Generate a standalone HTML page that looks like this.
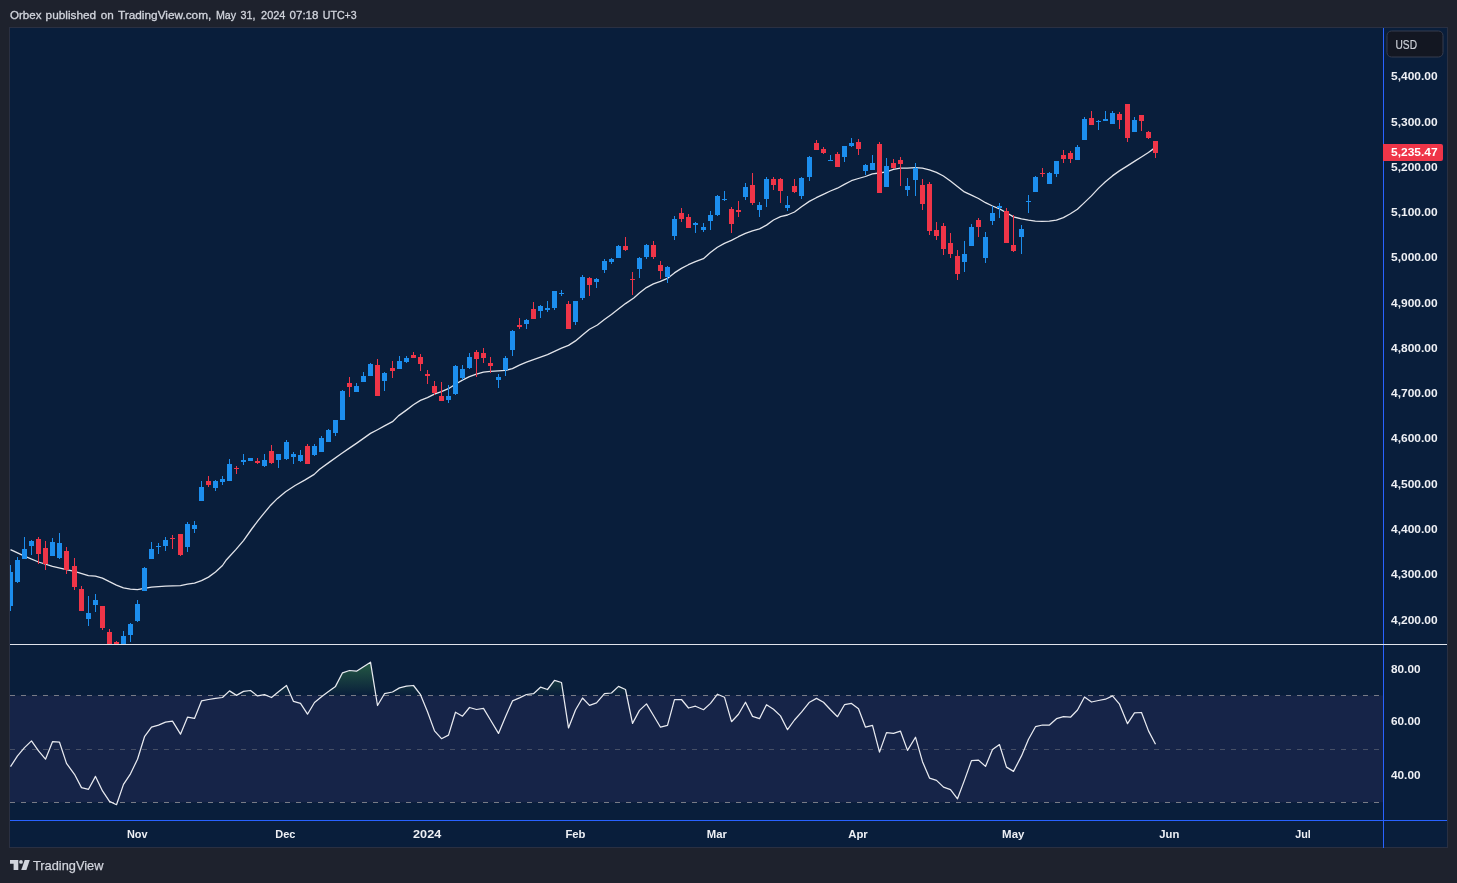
<!DOCTYPE html>
<html><head><meta charset="utf-8"><title>Orbex on TradingView</title>
<style>
html,body{margin:0;padding:0;background:#1e222d;}
body{width:1457px;height:883px;overflow:hidden;position:relative;font-family:'Liberation Sans', Arial, sans-serif;}
svg{position:absolute;left:0;top:0;display:block;will-change:transform}
.ax{font:bold 11.5px 'Liberation Sans', Arial, sans-serif;fill:#eef0f5}
.hd{font:11px 'Liberation Sans', Arial, sans-serif;fill:#d1d4dc;stroke:#d1d4dc;stroke-width:0.3px}
</style></head><body>
<svg width="1457" height="883" viewBox="0 0 1457 883">
<defs>
<clipPath id="main"><rect x="10" y="28" width="1373" height="616"/></clipPath>
<clipPath id="ob"><rect x="10" y="646" width="1373" height="49.5"/></clipPath>
<linearGradient id="g" x1="0" y1="615.2" x2="0" y2="695.5" gradientUnits="userSpaceOnUse">
<stop offset="0" stop-color="#4caf50" stop-opacity="1"/><stop offset="1" stop-color="#4caf50" stop-opacity="0"/></linearGradient>
</defs>
<rect width="1457" height="883" fill="#1e222d"/>
<rect x="9.5" y="27.5" width="1438" height="820" fill="#091e3b" stroke="#2a3042"/>
<text y="18.9" class="hd"><tspan x="10.0" textLength="31.5" lengthAdjust="spacingAndGlyphs">Orbex</tspan> <tspan x="45.6" textLength="50.6" lengthAdjust="spacingAndGlyphs">published</tspan> <tspan x="100.7" textLength="13.0" lengthAdjust="spacingAndGlyphs">on</tspan> <tspan x="118.0" textLength="93.3" lengthAdjust="spacingAndGlyphs">TradingView.com,</tspan> <tspan x="215.9" textLength="20.2" lengthAdjust="spacingAndGlyphs">May</tspan> <tspan x="240.6" textLength="15.0" lengthAdjust="spacingAndGlyphs">31,</tspan> <tspan x="261.1" textLength="24.3" lengthAdjust="spacingAndGlyphs">2024</tspan> <tspan x="289.5" textLength="29.0" lengthAdjust="spacingAndGlyphs">07:18</tspan> <tspan x="322.8" textLength="33.9" lengthAdjust="spacingAndGlyphs">UTC+3</tspan></text>
<!-- RSI band -->
<rect x="10" y="695.5" width="1373" height="106.8" fill="#162448"/>
<path d="M10 695.5H1383" stroke="#787b86" stroke-dasharray="5 6"/>
<path d="M10 749.5H1383" stroke="#787b86" stroke-opacity="0.5" stroke-dasharray="5 6"/>
<path d="M10 802.5H1383" stroke="#787b86" stroke-dasharray="5 6"/>
<path d="M10.5 695.5 L10.5 766.7 L17.5 755.9 L24.5 747.6 L31.5 740.9 L38.5 750.9 L45.5 759.2 L52.5 741.7 L59.5 742.2 L66.5 763.4 L74.5 774.3 L81.5 787.6 L88.5 789.3 L95.5 776.4 L102.5 790.9 L109.5 801.4 L116.5 804.7 L123.5 784.4 L130.5 773.8 L137.5 759.2 L144.5 736.7 L151.5 727.1 L158.5 725.1 L165.5 722.2 L172.5 721.2 L180.5 734.2 L187.5 717.2 L194.5 718.4 L201.5 700.9 L208.5 699.5 L215.5 698.4 L222.5 697.5 L229.5 690.9 L236.5 695.4 L243.5 691.4 L250.5 690.5 L257.5 695.9 L264.5 694.7 L271.5 697.5 L278.5 691.7 L286.5 685.5 L293.5 701.4 L300.5 703.4 L307.5 714.2 L314.5 702.5 L321.5 696.7 L328.5 691.4 L335.5 686.4 L342.5 672.8 L349.5 670.5 L356.5 671.2 L363.5 666.7 L370.5 662.2 L377.5 705.5 L384.5 693.7 L392.5 692.0 L399.5 687.9 L406.5 686.2 L413.5 685.5 L420.5 694.7 L427.5 711.7 L434.5 730.9 L441.5 738.7 L448.5 735.1 L455.5 712.2 L462.5 716.2 L469.5 707.5 L476.5 709.5 L483.5 708.4 L490.5 720.0 L498.5 733.4 L505.5 716.7 L512.5 700.9 L519.5 697.9 L526.5 694.5 L533.5 693.7 L540.5 687.2 L547.5 689.5 L554.5 680.4 L561.5 682.5 L568.5 727.9 L575.5 710.0 L582.5 698.0 L589.5 705.4 L596.5 702.9 L604.5 693.7 L611.5 693.0 L618.5 686.4 L625.5 689.5 L632.5 723.4 L639.5 710.4 L646.5 703.9 L653.5 715.5 L660.5 727.2 L667.5 725.4 L674.5 699.7 L681.5 699.5 L688.5 708.0 L695.5 706.2 L703.5 709.7 L710.5 703.4 L717.5 694.2 L724.5 697.2 L731.5 721.7 L738.5 714.2 L745.5 702.2 L752.5 716.4 L759.5 718.7 L766.5 704.7 L773.5 709.2 L780.5 715.9 L787.5 729.7 L794.5 720.0 L801.5 712.2 L809.5 702.2 L816.5 698.4 L823.5 702.2 L830.5 709.7 L837.5 716.7 L844.5 704.7 L851.5 703.4 L858.5 708.7 L865.5 727.2 L872.5 725.4 L879.5 752.1 L886.5 732.6 L893.5 733.4 L900.5 731.2 L907.5 750.4 L915.5 737.2 L922.5 761.7 L929.5 778.1 L936.5 780.4 L943.5 787.1 L950.5 789.6 L957.5 798.8 L964.5 780.1 L971.5 760.6 L978.5 760.1 L985.5 766.4 L992.5 749.6 L999.5 744.6 L1006.5 767.1 L1013.5 771.4 L1021.5 755.9 L1028.5 739.2 L1035.5 726.7 L1042.5 725.0 L1049.5 725.0 L1056.5 718.7 L1063.5 716.7 L1070.5 717.2 L1077.5 710.0 L1084.5 697.0 L1091.5 702.0 L1098.5 700.5 L1105.5 699.2 L1112.5 695.9 L1119.5 704.2 L1127.5 723.7 L1134.5 712.9 L1141.5 712.5 L1148.5 730.9 L1155.5 744.2 L1155.5 695.5Z" fill="url(#g)" clip-path="url(#ob)"/>
<path d="M10.5 766.7 L17.5 755.9 L24.5 747.6 L31.5 740.9 L38.5 750.9 L45.5 759.2 L52.5 741.7 L59.5 742.2 L66.5 763.4 L74.5 774.3 L81.5 787.6 L88.5 789.3 L95.5 776.4 L102.5 790.9 L109.5 801.4 L116.5 804.7 L123.5 784.4 L130.5 773.8 L137.5 759.2 L144.5 736.7 L151.5 727.1 L158.5 725.1 L165.5 722.2 L172.5 721.2 L180.5 734.2 L187.5 717.2 L194.5 718.4 L201.5 700.9 L208.5 699.5 L215.5 698.4 L222.5 697.5 L229.5 690.9 L236.5 695.4 L243.5 691.4 L250.5 690.5 L257.5 695.9 L264.5 694.7 L271.5 697.5 L278.5 691.7 L286.5 685.5 L293.5 701.4 L300.5 703.4 L307.5 714.2 L314.5 702.5 L321.5 696.7 L328.5 691.4 L335.5 686.4 L342.5 672.8 L349.5 670.5 L356.5 671.2 L363.5 666.7 L370.5 662.2 L377.5 705.5 L384.5 693.7 L392.5 692.0 L399.5 687.9 L406.5 686.2 L413.5 685.5 L420.5 694.7 L427.5 711.7 L434.5 730.9 L441.5 738.7 L448.5 735.1 L455.5 712.2 L462.5 716.2 L469.5 707.5 L476.5 709.5 L483.5 708.4 L490.5 720.0 L498.5 733.4 L505.5 716.7 L512.5 700.9 L519.5 697.9 L526.5 694.5 L533.5 693.7 L540.5 687.2 L547.5 689.5 L554.5 680.4 L561.5 682.5 L568.5 727.9 L575.5 710.0 L582.5 698.0 L589.5 705.4 L596.5 702.9 L604.5 693.7 L611.5 693.0 L618.5 686.4 L625.5 689.5 L632.5 723.4 L639.5 710.4 L646.5 703.9 L653.5 715.5 L660.5 727.2 L667.5 725.4 L674.5 699.7 L681.5 699.5 L688.5 708.0 L695.5 706.2 L703.5 709.7 L710.5 703.4 L717.5 694.2 L724.5 697.2 L731.5 721.7 L738.5 714.2 L745.5 702.2 L752.5 716.4 L759.5 718.7 L766.5 704.7 L773.5 709.2 L780.5 715.9 L787.5 729.7 L794.5 720.0 L801.5 712.2 L809.5 702.2 L816.5 698.4 L823.5 702.2 L830.5 709.7 L837.5 716.7 L844.5 704.7 L851.5 703.4 L858.5 708.7 L865.5 727.2 L872.5 725.4 L879.5 752.1 L886.5 732.6 L893.5 733.4 L900.5 731.2 L907.5 750.4 L915.5 737.2 L922.5 761.7 L929.5 778.1 L936.5 780.4 L943.5 787.1 L950.5 789.6 L957.5 798.8 L964.5 780.1 L971.5 760.6 L978.5 760.1 L985.5 766.4 L992.5 749.6 L999.5 744.6 L1006.5 767.1 L1013.5 771.4 L1021.5 755.9 L1028.5 739.2 L1035.5 726.7 L1042.5 725.0 L1049.5 725.0 L1056.5 718.7 L1063.5 716.7 L1070.5 717.2 L1077.5 710.0 L1084.5 697.0 L1091.5 702.0 L1098.5 700.5 L1105.5 699.2 L1112.5 695.9 L1119.5 704.2 L1127.5 723.7 L1134.5 712.9 L1141.5 712.5 L1148.5 730.9 L1155.5 744.2" fill="none" stroke="#e8eaf0" stroke-width="1.25" stroke-linejoin="round"/>
<g clip-path="url(#main)">
<path d="M10.5 549.7 L24.5 556.2 L38.5 562.0 L52.5 566.4 L66.5 569.7 L74.4 571.4 L88.4 575.6 L95.4 576.1 L102.4 578.1 L109.4 581.7 L116.4 585.1 L123.4 587.9 L130.4 589.2 L137.4 589.6 L144.4 588.4 L151.4 587.2 L158.4 586.6 L165.4 586.1 L172.5 585.9 L180.5 585.7 L187.5 584.2 L194.5 583.1 L201.5 580.6 L208.5 577.1 L215.5 572.0 L222.5 565.5 L226.5 559.7 L236.0 549.4 L243.5 540.6 L251.7 529.0 L258.4 520.2 L263.9 513.4 L270.7 505.2 L277.5 498.4 L285.6 491.7 L295.1 485.5 L304.7 480.1 L314.2 474.4 L319.6 469.2 L329.1 462.4 L341.2 453.8 L349.4 448.1 L356.4 443.4 L363.5 438.4 L370.5 433.4 L377.5 429.7 L384.5 425.9 L392.5 421.7 L398.4 415.9 L406.4 410.1 L413.4 404.8 L420.4 400.4 L427.4 397.6 L434.4 394.2 L441.4 391.7 L448.4 388.7 L455.4 384.2 L462.4 380.1 L469.4 376.7 L476.4 374.2 L483.4 372.2 L490.4 371.4 L498.4 370.9 L505.4 370.4 L512.4 368.7 L519.4 365.1 L526.5 362.2 L533.5 359.7 L540.5 357.1 L547.5 354.7 L554.5 351.4 L561.5 348.1 L568.5 345.4 L575.5 340.9 L582.5 335.0 L589.5 329.2 L597.4 325.0 L604.4 319.5 L611.4 314.5 L618.4 309.1 L625.5 303.6 L633.8 298.0 L639.4 293.1 L646.4 287.6 L653.4 283.9 L660.4 281.4 L667.4 278.4 L674.4 272.9 L681.4 268.4 L688.4 264.7 L695.4 261.7 L703.4 258.7 L710.4 252.6 L717.4 247.2 L724.4 243.4 L731.4 240.4 L738.4 236.7 L745.4 233.4 L752.4 230.9 L759.5 228.9 L766.5 225.1 L773.5 220.0 L780.5 216.7 L787.5 215.0 L794.5 212.0 L801.5 206.7 L809.3 201.4 L816.3 197.7 L823.3 194.4 L830.4 191.0 L837.4 188.2 L844.4 184.4 L851.4 180.7 L858.4 178.5 L865.4 176.5 L872.4 173.9 L879.4 173.0 L886.4 171.9 L893.4 169.4 L900.4 168.2 L907.4 168.2 L915.4 167.7 L922.4 168.2 L929.4 169.9 L936.4 172.4 L943.4 176.0 L950.4 181.0 L957.4 186.4 L964.4 191.9 L971.4 195.2 L978.5 198.5 L985.5 202.7 L992.5 206.0 L999.5 208.9 L1006.5 212.7 L1013.5 216.9 L1021.5 218.9 L1028.5 220.2 L1035.3 221.1 L1042.3 221.4 L1049.3 221.1 L1056.4 220.1 L1063.4 217.6 L1070.4 213.8 L1077.4 209.2 L1084.4 202.6 L1091.4 195.9 L1098.4 188.4 L1105.4 181.7 L1112.4 175.9 L1119.4 170.9 L1127.4 165.9 L1134.4 161.4 L1141.4 157.0 L1148.4 152.5 L1153.4 148.9" fill="none" stroke="#e2e4ea" stroke-width="1.3" stroke-linejoin="round"/>
<path fill="#1c8eee" d="M10 565h1v46h-1zM8 572h5v34h-5zM17 557h1v26h-1zM15 560h5v22h-5zM24 537h1v22h-1zM22 549h5v10h-5zM31 540h1v15h-1zM29 541h5v5h-5zM52 538h1v18h-1zM50 542h5v14h-5zM59 533h1v26h-1zM57 543h5v15h-5zM88 596h1v30h-1zM86 613h5v6h-5zM95 594h1v18h-1zM93 600h5v5h-5zM123 631h1v19h-1zM121 636h5v14h-5zM130 623h1v19h-1zM128 624h5v11h-5zM137 600h1v22h-1zM135 604h5v17h-5zM144 567h1v24h-1zM142 568h5v23h-5zM151 542h1v17h-1zM149 549h5v10h-5zM158 543h1v11h-1zM156 546h5v1h-5zM165 537h1v14h-1zM163 540h5v6h-5zM187 522h1v30h-1zM185 524h5v23h-5zM194 521h1v12h-1zM192 525h5v4h-5zM201 481h1v20h-1zM199 487h5v14h-5zM215 480h1v11h-1zM213 481h5v7h-5zM222 476h1v9h-1zM220 479h5v3h-5zM229 459h1v22h-1zM227 464h5v17h-5zM243 454h1v11h-1zM241 460h5v2h-5zM250 458h1v3h-1zM248 458h5v3h-5zM264 454h1v13h-1zM262 460h5v6h-5zM278 454h1v14h-1zM276 454h5v6h-5zM286 440h1v20h-1zM284 442h5v17h-5zM293 452h1v12h-1zM291 454h5v3h-5zM300 450h1v12h-1zM298 455h5v6h-5zM314 444h1v12h-1zM312 446h5v9h-5zM321 436h1v16h-1zM319 438h5v14h-5zM328 429h1v13h-1zM326 430h5v12h-5zM335 420h1v16h-1zM333 420h5v13h-5zM342 390h1v30h-1zM340 391h5v29h-5zM356 383h1v9h-1zM354 386h5v6h-5zM363 372h1v10h-1zM361 376h5v6h-5zM370 363h1v13h-1zM368 364h5v12h-5zM384 372h1v19h-1zM382 373h5v8h-5zM399 356h1v13h-1zM397 361h5v8h-5zM406 356h1v7h-1zM404 358h5v4h-5zM448 385h1v18h-1zM446 396h5v4h-5zM455 365h1v30h-1zM453 366h5v28h-5zM462 365h1v15h-1zM460 369h5v9h-5zM469 353h1v16h-1zM467 357h5v11h-5zM498 374h1v14h-1zM496 377h5v3h-5zM505 356h1v20h-1zM503 358h5v12h-5zM512 330h1v26h-1zM510 331h5v19h-5zM526 319h1v10h-1zM524 320h5v4h-5zM540 305h1v13h-1zM538 306h5v5h-5zM547 301h1v11h-1zM545 308h5v2h-5zM554 291h1v19h-1zM552 291h5v17h-5zM561 290h1v6h-1zM559 293h5v1h-5zM575 301h1v24h-1zM573 301h5v21h-5zM582 275h1v25h-1zM580 277h5v21h-5zM596 278h1v10h-1zM594 279h5v3h-5zM604 259h1v14h-1zM602 261h5v9h-5zM611 258h1v6h-1zM609 259h5v3h-5zM618 245h1v13h-1zM616 246h5v12h-5zM639 257h1v21h-1zM637 258h5v11h-5zM646 244h1v15h-1zM644 245h5v12h-5zM667 266h1v17h-1zM665 267h5v10h-5zM674 216h1v24h-1zM672 219h5v17h-5zM695 222h1v11h-1zM693 223h5v2h-5zM703 223h1v9h-1zM701 227h5v3h-5zM710 211h1v19h-1zM708 215h5v6h-5zM717 195h1v21h-1zM715 196h5v19h-5zM724 191h1v10h-1zM722 199h5v1h-5zM745 183h1v17h-1zM743 187h5v10h-5zM759 202h1v15h-1zM757 205h5v5h-5zM766 177h1v30h-1zM764 179h5v20h-5zM787 196h1v15h-1zM785 205h5v3h-5zM801 177h1v22h-1zM799 178h5v18h-5zM809 156h1v25h-1zM807 157h5v20h-5zM830 155h1v6h-1zM828 160h5v1h-5zM844 146h1v16h-1zM842 146h5v11h-5zM851 138h1v9h-1zM849 143h5v3h-5zM865 164h1v11h-1zM863 165h5v6h-5zM872 155h1v15h-1zM870 163h5v7h-5zM886 158h1v29h-1zM884 166h5v21h-5zM907 178h1v18h-1zM905 186h5v4h-5zM915 163h1v33h-1zM913 168h5v12h-5zM964 241h1v31h-1zM962 254h5v8h-5zM971 224h1v22h-1zM969 227h5v19h-5zM985 232h1v31h-1zM983 237h5v21h-5zM992 206h1v19h-1zM990 213h5v8h-5zM999 203h1v15h-1zM997 206h5v2h-5zM1021 225h1v29h-1zM1019 229h5v8h-5zM1028 195h1v18h-1zM1026 201h5v1h-5zM1035 176h1v16h-1zM1033 177h5v15h-5zM1049 172h1v12h-1zM1047 173h5v11h-5zM1056 161h1v16h-1zM1054 161h5v13h-5zM1077 145h1v15h-1zM1075 147h5v13h-5zM1084 117h1v23h-1zM1082 119h5v21h-5zM1098 120h1v10h-1zM1096 121h5v1h-5zM1105 111h1v10h-1zM1103 119h5v2h-5zM1112 111h1v13h-1zM1110 113h5v11h-5zM1134 117h1v15h-1zM1132 120h5v12h-5z"/>
<path fill="#ef3548" d="M38 537h1v27h-1zM36 539h5v15h-5zM45 541h1v29h-1zM43 548h5v16h-5zM66 547h1v27h-1zM64 551h5v19h-5zM74 558h1v32h-1zM72 566h5v21h-5zM81 586h1v25h-1zM79 589h5v22h-5zM102 606h1v24h-1zM100 606h5v22h-5zM109 629h1v21h-1zM107 632h5v18h-5zM116 641h1v9h-1zM114 642h5v8h-5zM172 535h1v14h-1zM170 538h5v1h-5zM180 534h1v22h-1zM178 534h5v21h-5zM208 476h1v11h-1zM206 481h5v4h-5zM236 466h1v8h-1zM234 468h5v1h-5zM257 458h1v6h-1zM255 461h5v2h-5zM271 445h1v19h-1zM269 451h5v12h-5zM307 444h1v20h-1zM305 446h5v18h-5zM349 377h1v20h-1zM347 383h5v4h-5zM377 359h1v37h-1zM375 365h5v31h-5zM392 361h1v17h-1zM390 368h5v3h-5zM413 352h1v6h-1zM411 355h5v3h-5zM420 354h1v17h-1zM418 357h5v7h-5zM427 370h1v14h-1zM425 374h5v2h-5zM434 381h1v14h-1zM432 386h5v7h-5zM441 382h1v19h-1zM439 396h5v5h-5zM476 350h1v27h-1zM474 352h5v7h-5zM483 348h1v15h-1zM481 353h5v5h-5zM490 357h1v16h-1zM488 363h5v3h-5zM519 318h1v11h-1zM517 325h5v2h-5zM533 302h1v17h-1zM531 309h5v10h-5zM568 301h1v28h-1zM566 304h5v25h-5zM589 277h1v19h-1zM587 278h5v7h-5zM625 237h1v14h-1zM623 246h5v4h-5zM632 272h1v23h-1zM630 279h5v1h-5zM653 241h1v18h-1zM651 245h5v12h-5zM660 261h1v18h-1zM658 265h5v6h-5zM681 208h1v14h-1zM679 213h5v6h-5zM688 214h1v14h-1zM686 217h5v11h-5zM731 207h1v26h-1zM729 209h5v15h-5zM738 201h1v16h-1zM736 210h5v2h-5zM752 173h1v32h-1zM750 185h5v18h-5zM773 177h1v13h-1zM771 179h5v6h-5zM780 178h1v25h-1zM778 179h5v12h-5zM794 179h1v14h-1zM792 186h5v6h-5zM816 140h1v10h-1zM814 143h5v7h-5zM823 147h1v7h-1zM821 149h5v4h-5zM837 152h1v15h-1zM835 154h5v13h-5zM858 139h1v16h-1zM856 142h5v7h-5zM879 142h1v51h-1zM877 144h5v49h-5zM893 159h1v10h-1zM891 163h5v5h-5zM900 157h1v29h-1zM898 160h5v4h-5zM922 179h1v31h-1zM920 185h5v19h-5zM929 182h1v53h-1zM927 184h5v47h-5zM936 222h1v18h-1zM934 230h5v6h-5zM943 223h1v32h-1zM941 226h5v23h-5zM950 233h1v25h-1zM948 243h5v11h-5zM957 250h1v30h-1zM955 256h5v18h-5zM978 218h1v19h-1zM976 220h5v7h-5zM1006 208h1v35h-1zM1004 211h5v32h-5zM1013 215h1v37h-1zM1011 245h5v6h-5zM1042 168h1v9h-1zM1040 173h5v1h-5zM1063 150h1v13h-1zM1061 155h5v4h-5zM1070 151h1v12h-1zM1068 153h5v6h-5zM1091 111h1v14h-1zM1089 118h5v7h-5zM1119 112h1v17h-1zM1117 114h5v6h-5zM1127 104h1v38h-1zM1125 104h5v34h-5zM1141 115h1v16h-1zM1139 115h5v6h-5zM1148 131h1v8h-1zM1146 132h5v6h-5zM1155 141h1v17h-1zM1153 141h5v12h-5z"/>
</g>
<!-- separators / axes -->
<rect x="1383" y="28" width="1" height="820" fill="#2962ff"/>
<rect x="10" y="820" width="1437" height="1" fill="#2962ff"/>
<rect x="10" y="644" width="1437" height="1" fill="#e0e3eb"/>
<!-- USD -->
<rect x="1387" y="31" width="56" height="26" rx="4.5" fill="#131722" stroke="#363c4e"/>
<text x="1395.5" y="49" style="font:12.5px 'Liberation Sans', Arial, sans-serif;fill:#cdd0d8;stroke:#cdd0d8;stroke-width:0.2px" textLength="21.5" lengthAdjust="spacingAndGlyphs">USD</text>
<text x="1391" y="80.2" class="ax" textLength="46.6" lengthAdjust="spacingAndGlyphs">5,400.00</text>
<text x="1391" y="125.5" class="ax" textLength="46.6" lengthAdjust="spacingAndGlyphs">5,300.00</text>
<text x="1391" y="170.7" class="ax" textLength="46.6" lengthAdjust="spacingAndGlyphs">5,200.00</text>
<text x="1391" y="216.0" class="ax" textLength="46.6" lengthAdjust="spacingAndGlyphs">5,100.00</text>
<text x="1391" y="261.3" class="ax" textLength="46.6" lengthAdjust="spacingAndGlyphs">5,000.00</text>
<text x="1391" y="306.6" class="ax" textLength="46.6" lengthAdjust="spacingAndGlyphs">4,900.00</text>
<text x="1391" y="351.9" class="ax" textLength="46.6" lengthAdjust="spacingAndGlyphs">4,800.00</text>
<text x="1391" y="397.1" class="ax" textLength="46.6" lengthAdjust="spacingAndGlyphs">4,700.00</text>
<text x="1391" y="442.4" class="ax" textLength="46.6" lengthAdjust="spacingAndGlyphs">4,600.00</text>
<text x="1391" y="487.7" class="ax" textLength="46.6" lengthAdjust="spacingAndGlyphs">4,500.00</text>
<text x="1391" y="533.0" class="ax" textLength="46.6" lengthAdjust="spacingAndGlyphs">4,400.00</text>
<text x="1391" y="578.2" class="ax" textLength="46.6" lengthAdjust="spacingAndGlyphs">4,300.00</text>
<text x="1391" y="623.5" class="ax" textLength="46.6" lengthAdjust="spacingAndGlyphs">4,200.00</text>
<text x="1391" y="672.5" class="ax" textLength="29.5" lengthAdjust="spacingAndGlyphs">80.00</text>
<text x="1391" y="725.4" class="ax" textLength="29.5" lengthAdjust="spacingAndGlyphs">60.00</text>
<text x="1391" y="779.2" class="ax" textLength="29.5" lengthAdjust="spacingAndGlyphs">40.00</text>
<text x="126.9" y="837.8" class="ax" textLength="20.6" lengthAdjust="spacingAndGlyphs">Nov</text>
<text x="275.3" y="837.8" class="ax" textLength="20.1" lengthAdjust="spacingAndGlyphs">Dec</text>
<text x="413.1" y="837.8" class="ax" textLength="28.1" lengthAdjust="spacingAndGlyphs">2024</text>
<text x="565.4" y="837.8" class="ax" textLength="20.1" lengthAdjust="spacingAndGlyphs">Feb</text>
<text x="706.8" y="837.8" class="ax" textLength="20.1" lengthAdjust="spacingAndGlyphs">Mar</text>
<text x="848.2" y="837.8" class="ax" textLength="19.6" lengthAdjust="spacingAndGlyphs">Apr</text>
<text x="1002.1" y="837.8" class="ax" textLength="22.3" lengthAdjust="spacingAndGlyphs">May</text>
<text x="1159.2" y="837.8" class="ax" textLength="20.1" lengthAdjust="spacingAndGlyphs">Jun</text>
<text x="1295.2" y="837.8" class="ax" textLength="15.6" lengthAdjust="spacingAndGlyphs">Jul</text>
<!-- last price -->
<path d="M1383 144h58a2 2 0 0 1 2 2v13a2 2 0 0 1-2 2H1383z" fill="#ef3548"/>
<text x="1391" y="156.2" class="ax" style="fill:#fff" textLength="46.6" lengthAdjust="spacingAndGlyphs">5,235.47</text>
<!-- logo -->
<g fill="#d1d4dc">
<path d="M10 860h8.3v10h-4.7v-6.2H10z"/>
<circle cx="21" cy="861.9" r="1.85"/>
<path d="M24.7 860h5.1l-3.4 10h-5.15z"/>
</g>
<text x="33" y="870" style="font:13px 'Liberation Sans', Arial, sans-serif;fill:#d1d4dc;stroke:#d1d4dc;stroke-width:0.25px" textLength="70.4" lengthAdjust="spacingAndGlyphs">TradingView</text>
</svg>
</body></html>
